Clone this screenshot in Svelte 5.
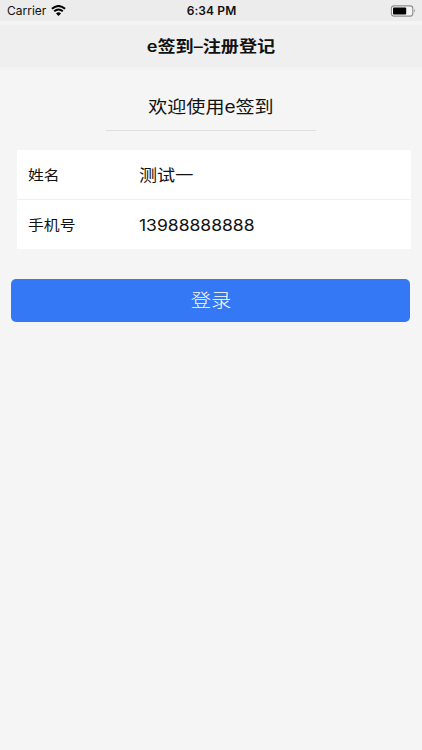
<script>
  let name = '测试一'
  let phone = '13988888888'
</script>

<div class="page">
  <div class="status">
    <div class="carrier">
      <span>Carrier</span>
      <svg width="15" height="11" viewBox="0 0 15 11">
        <path d="M0.9 3.8 Q7.5 -1.8 14.1 3.8" />
        <path d="M3.2 6.3 Q7.5 2.7 11.8 6.3" />
        <path class="dot" d="M5 8.4 Q7.5 6.3 10 8.4 L7.5 11 Z" />
      </svg>
    </div>
    <span class="time">6:34 PM</span>
    <div class="power">
      <svg width="26" height="12" viewBox="0 0 26 12">
        <rect class="shell" x="1.4" y="0.9" width="21.4" height="10.2" rx="2.6" />
        <rect x="3" y="2.4" width="13.2" height="7.2" rx="1" />
        <path class="tip" d="M24.2 4 Q25.8 5.8 24.2 7.6 Z" />
      </svg>
    </div>
  </div>
  <header><h1>e签到–注册登记</h1></header>

  <div class="welcome"><span>欢迎使用e签到</span></div>

  <div class="form">
    <label class="row">
      <span class="label">姓名</span>
      <span class="value">{name}</span>
    </label>
    <label class="row">
      <span class="label">手机号</span>
      <span class="value digits">{phone}</span>
    </label>
  </div>

  <button><span>登录</span></button>
</div>

<style>
  :global(body) {
    background: #f5f5f5;
  }

  .page {
    min-height: 750px;
    background: #f5f5f5;
    color: #111;
    font-family: Inter, "Noto Sans CJK SC", sans-serif;
  }

  .status {
    box-sizing: border-box;
    height: 25px;
    padding: 0 6px 0 7px;
    border-bottom: 4px solid #f4f4f6;
    background: #ececec;
    display: grid;
    grid-template-columns: 1fr auto 1fr;
    align-items: center;
    font-size: 12px;
    line-height: 21px;
    color: #111;
  }

  .carrier {
    display: flex;
    align-items: center;
    gap: 5px;
  }

  .carrier path {
    fill: none;
    stroke: #000;
    stroke-width: 2;
  }

  .carrier .dot {
    fill: #000;
    stroke: none;
  }

  .time {
    font-weight: 600;
    letter-spacing: 0.1px;
  }

  .power {
    display: flex;
    justify-content: flex-end;
  }

  .shell {
    fill: #f4f4f4;
    stroke: #8e8e8e;
    stroke-width: 1.1;
  }

  .tip {
    fill: #777;
  }

  header {
    box-sizing: border-box;
    height: 45px;
    border-bottom: 3px solid #f3f3f7;
    background: #efefef;
    text-align: center;
  }

  /* the type is slightly extended */
  h1, .welcome span, .label, .value, button span {
    display: inline-block;
    transform: scaleX(1.13);
    white-space: nowrap;
  }

  h1 {
    margin: 0;
    font-size: 15.5px;
    font-weight: 600;
    line-height: 43px;
    transform: scaleX(1.17);
  }

  .welcome {
    box-sizing: border-box;
    width: 210px;
    height: 47px;
    margin: 14px auto 0;
    border-bottom: 1px solid #dfdfdf;
    text-align: center;
    font-size: 17px;
    line-height: 46px;
  }

  .welcome span {
    transform: scaleX(1.12);
  }

  .form {
    margin: 19px 11px 0 17px;
    background: #fff;
  }

  .row {
    box-sizing: border-box;
    height: 49px;
    padding: 0 0 2px 11px;
    display: grid;
    grid-template-columns: 111px 1fr;
    align-items: center;
    justify-items: start;
  }

  .row + .row {
    height: 50px;
    border-top: 1px solid #f0f0f0;
  }

  .label, .value {
    transform-origin: left;
  }

  .label {
    font-size: 14px;
  }

  .value {
    font-size: 16px;
  }

  .digits {
    padding-top: 3px;
    font-size: 15.5px;
  }

  button {
    display: block;
    width: 399px;
    height: 43px;
    margin: 30px 0 0 11.4px;
    padding: 0;
    border: 0;
    border-radius: 5px;
    background: #3478f6;
    color: #fff;
    font-family: inherit;
    font-size: 18px;
    font-weight: 300;
    line-height: 43px;
  }
</style>
